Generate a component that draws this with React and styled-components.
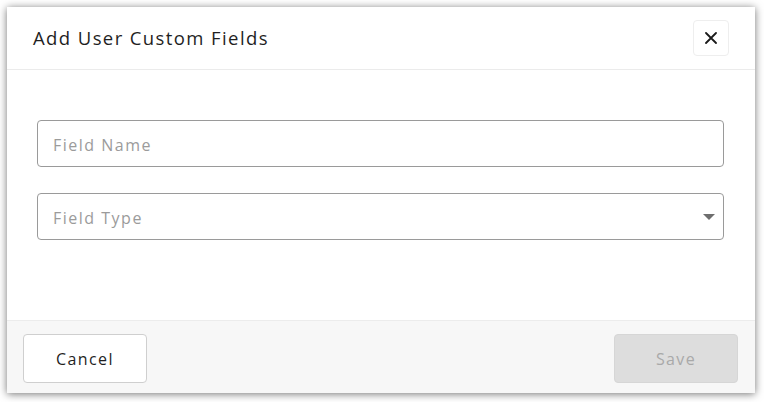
import React from "react";
import styled, { createGlobalStyle } from "styled-components";

const GlobalStyle = createGlobalStyle`
  html, body {
    margin: 0;
    padding: 0;
    background: #ffffff;
    font-family: "Open Sans", "Liberation Sans", sans-serif;
  }
  * { box-sizing: border-box; }
`;

const Page = styled.div`
  width: 764px;
  height: 402px;
  padding: 7px 9px 9px 7px;
`;

const Dialog = styled.div`
  width: 748px;
  height: 386px;
  background: #fff;
  display: flex;
  flex-direction: column;
  box-shadow: 0 1px 8px rgba(0, 0, 0, 0.55);
  overflow: hidden;
`;

const Header = styled.div`
  height: 63px;
  display: flex;
  align-items: center;
  justify-content: space-between;
  padding: 0 26px 0 26px;
  border-bottom: 1px solid #ebebeb;
`;

const Title = styled.h2`
  margin: 0;
  margin-top: -2px;
  font-size: 18.5px;
  font-weight: 500;
  color: #1f1f1f;
  letter-spacing: 1.4px;
`;

const CloseButton = styled.button`
  width: 36px;
  height: 36px;
  border: 1px solid #eeeeee;
  border-radius: 4px;
  background: #fff;
  display: flex;
  align-items: center;
  justify-content: center;
  padding: 0;
  cursor: pointer;
`;

const Body = styled.div`
  flex: 1;
  display: flex;
  flex-direction: column;
  gap: 26px;
  padding: 50px 31px 0 30px;
`;

const Field = styled.div`
  position: relative;
  height: 47px;
  border: 1px solid #9a9a9a;
  border-radius: 4px;
  display: flex;
  align-items: center;
  padding: 0 15px;
`;

const Placeholder = styled.span`
  font-size: 16px;
  color: #9b9b9b;
  letter-spacing: 1.5px;
  margin-top: 2px;
`;

const Caret = styled.span`
  position: absolute;
  right: 8px;
  top: 50%;
  margin-top: -3px;
  width: 0;
  height: 0;
  border-left: 6px solid transparent;
  border-right: 6px solid transparent;
  border-top: 6px solid #6e6e6e;
`;

const Footer = styled.div`
  height: 73px;
  background: #f7f7f7;
  border-top: 1px solid #ececec;
  display: flex;
  align-items: flex-start;
  justify-content: space-between;
  padding: 13px 17px 0 16px;
`;

const Button = styled.button`
  width: 124px;
  height: 49px;
  border-radius: 4px;
  font-family: inherit;
  font-size: 16px;
  letter-spacing: 1.4px;
  border: 1px solid ${(p) => (p.$disabled ? "#d6d6d6" : "#cfcfcf")};
  background: ${(p) => (p.$disabled ? "#dddddd" : "#ffffff")};
  color: ${(p) => (p.$disabled ? "#a9a9a9" : "#1f1f1f")};
  cursor: ${(p) => (p.$disabled ? "default" : "pointer")};
`;

export default function App() {
  return (
    <Page>
      <GlobalStyle />
      <Dialog>
        <Header>
          <Title>Add User Custom Fields</Title>
          <CloseButton aria-label="Close">
            <svg width="12" height="12" viewBox="0 0 12 12">
              <path d="M1 1 L11 11 M11 1 L1 11" stroke="#1a1a1a" strokeWidth="1.8" strokeLinecap="round" />
            </svg>
          </CloseButton>
        </Header>
        <Body>
          <Field>
            <Placeholder>Field Name</Placeholder>
          </Field>
          <Field>
            <Placeholder>Field Type</Placeholder>
            <Caret />
          </Field>
        </Body>
        <Footer>
          <Button>Cancel</Button>
          <Button $disabled disabled>Save</Button>
        </Footer>
      </Dialog>
    </Page>
  );
}
